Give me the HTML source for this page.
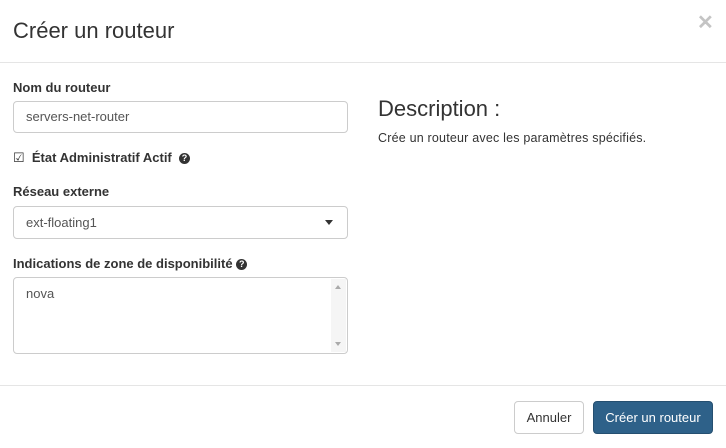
<!DOCTYPE html>
<html><head><meta charset="utf-8"><style>
*{box-sizing:border-box}
body{margin:0;width:726px;height:448px;background:#fff;font-family:"Liberation Sans",sans-serif;color:#333;position:relative;overflow:hidden}
.a{position:absolute}
.inp{position:absolute;left:13px;width:335px;border:1px solid #ccc;border-radius:4px;font-size:13px;color:#555;padding-left:12px}
.lbl{position:absolute;left:13px;font-size:13px;font-weight:bold;color:#333}
.q{display:inline-block;width:11px;height:11px;border-radius:50%;background:#333;color:#fff;font-size:9px;text-align:center;line-height:11px;vertical-align:1px}
</style></head><body>
<div class="a" style="left:13px;top:18px;font-size:22px;color:#333">Créer un routeur</div>
<div class="a" style="left:697px;top:10px;font-size:20px;font-weight:bold;color:#c4c4c4">✕</div>
<div class="a" style="left:0;top:62px;width:726px;border-top:1px solid #e5e5e5"></div>
<div class="lbl" style="top:80px">Nom du routeur</div>
<div class="inp" style="top:101px;height:32px;line-height:30px">servers-net-router</div>
<div class="a" style="left:13px;top:150px;font-size:13px;font-weight:bold"><span style="font-weight:normal">☑</span>&nbsp; État Administratif Actif &nbsp;<span class="q">?</span></div>
<div class="lbl" style="top:184px">Réseau externe</div>
<div class="inp" style="top:206px;height:33px;line-height:31px">ext-floating1<span style="position:absolute;right:14px;top:13px;border-left:4px solid transparent;border-right:4px solid transparent;border-top:5px solid #333"></span></div>
<div class="lbl" style="top:256px">Indications de zone de disponibilité <span class="q">?</span></div>
<div class="inp" style="top:277px;height:77px;padding-top:8px">nova<div style="position:absolute;right:1px;top:1px;width:15px;height:73px;background:#f5f5f5"><span style="position:absolute;left:4px;top:6px;border-left:3px solid transparent;border-right:3px solid transparent;border-bottom:4px solid #aaa"></span><span style="position:absolute;left:4px;bottom:6px;border-left:3px solid transparent;border-right:3px solid transparent;border-top:4px solid #aaa"></span></div></div>
<div class="a" style="left:378px;top:96px;font-size:22px;color:#333">Description :</div>
<div class="a" style="left:378px;top:131px;font-size:12.5px;color:#333;letter-spacing:0.2px">Crée un routeur avec les paramètres spécifiés.</div>
<div class="a" style="left:0;top:385px;width:726px;border-top:1px solid #e5e5e5"></div>
<div class="a" style="left:514px;top:401px;width:70px;height:33px;border:1px solid #ccc;border-radius:4px;font-size:13px;line-height:31px;text-align:center;color:#333">Annuler</div>
<div class="a" style="left:593px;top:401px;width:120px;height:33px;background:#2e6189;border:1px solid #254f70;border-radius:4px;font-size:13px;line-height:31px;text-align:center;color:#fff">Créer un routeur</div>
</body></html>
